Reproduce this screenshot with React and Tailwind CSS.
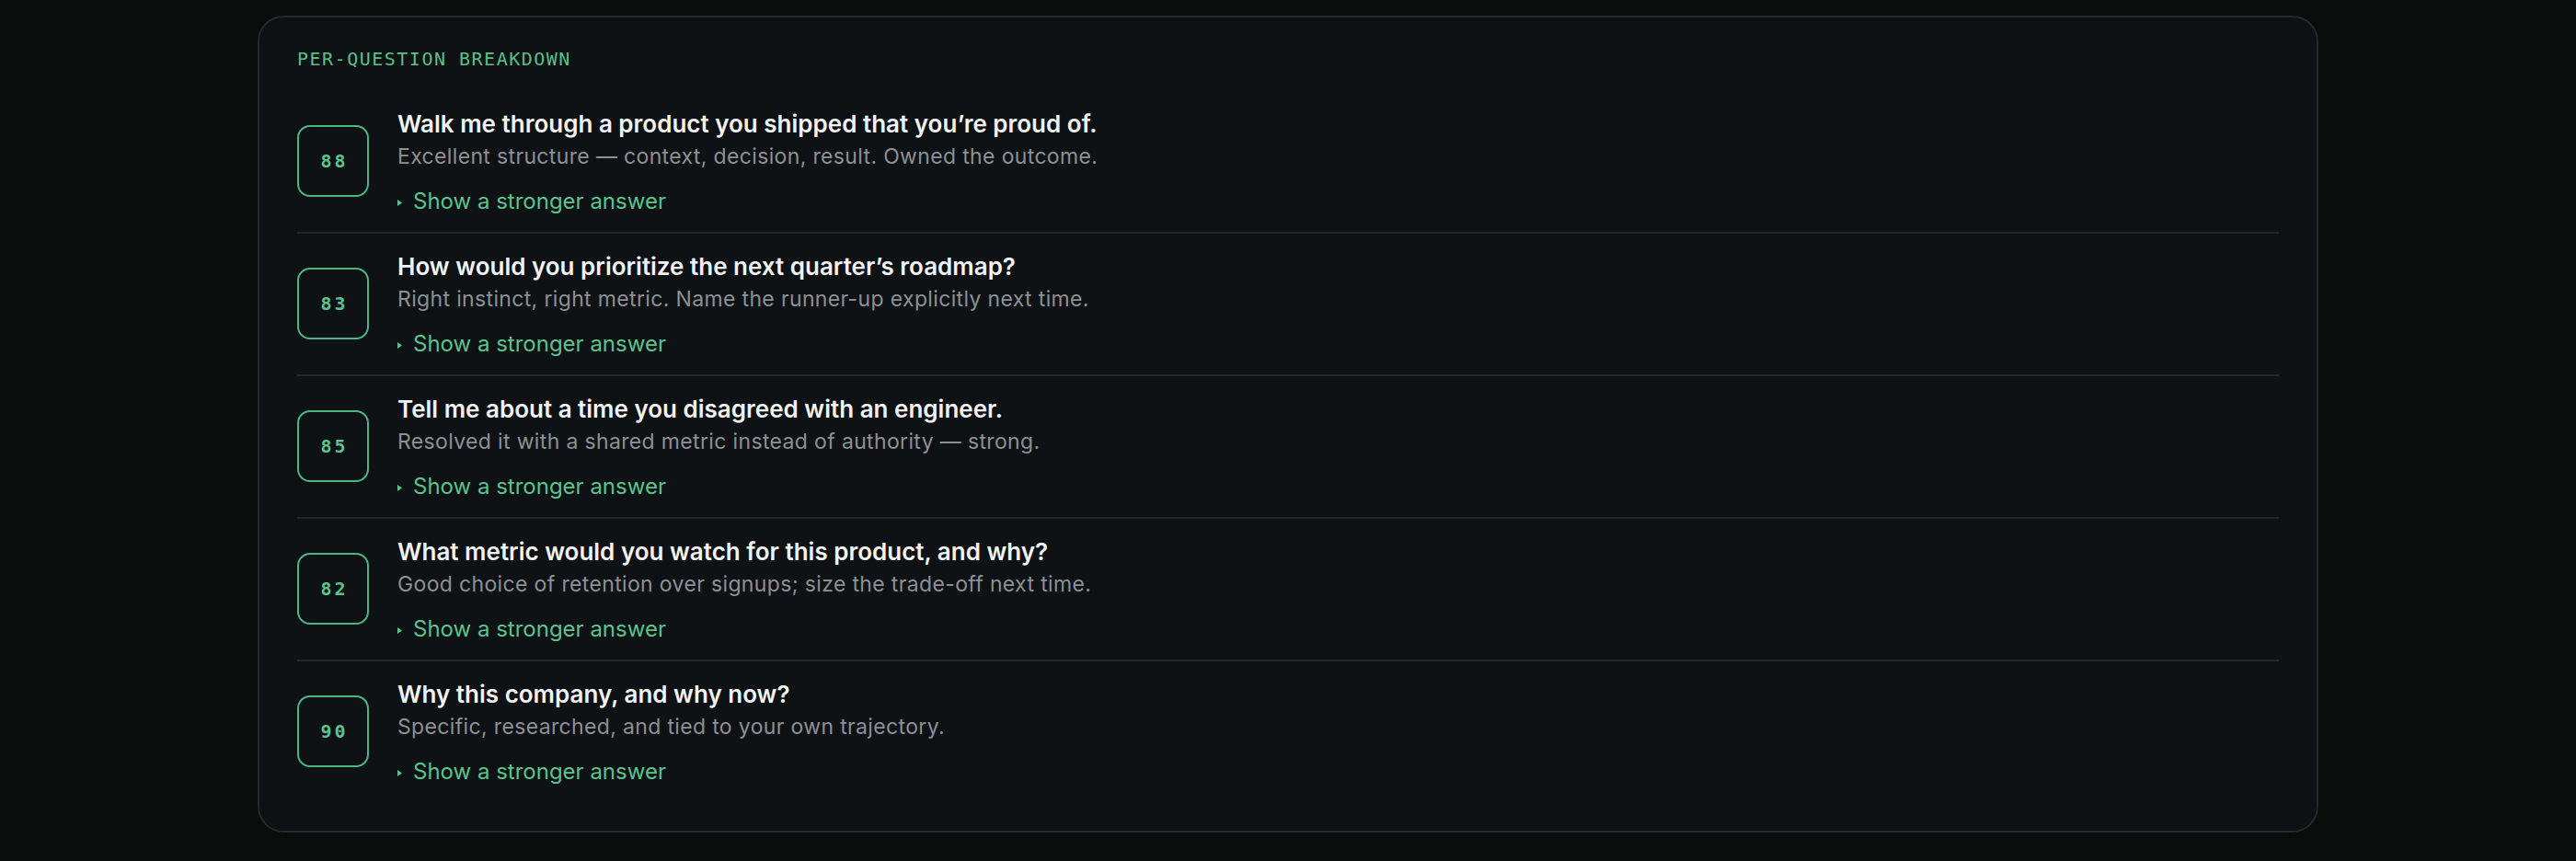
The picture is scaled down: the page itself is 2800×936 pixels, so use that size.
const questions = [
  {
    score: 88,
    title: "Walk me through a product you shipped that you’re proud of.",
    note: "Excellent structure — context, decision, result. Owned the outcome.",
  },
  {
    score: 83,
    title: "How would you prioritize the next quarter’s roadmap?",
    note: "Right instinct, right metric. Name the runner-up explicitly next time.",
  },
  {
    score: 85,
    title: "Tell me about a time you disagreed with an engineer.",
    note: "Resolved it with a shared metric instead of authority — strong.",
  },
  {
    score: 82,
    title: "What metric would you watch for this product, and why?",
    note: "Good choice of retention over signups; size the trade-off next time.",
  },
  {
    score: 90,
    title: "Why this company, and why now?",
    note: "Specific, researched, and tied to your own trajectory.",
  },
];

function QuestionRow({ q, last }) {
  return (
    <div
      className={`flex items-start gap-[31px] pt-[19px] pb-[17px] ${
        last ? "" : "border-b-2 border-[#23262a]"
      }`}
    >
      <div className="mt-[18px] flex h-[78px] w-[78px] shrink-0 items-center justify-center rounded-[14px] border-2 border-[#4cb582]">
        <span className="font-['DejaVu_Sans_Mono',monospace] text-[20px] font-bold tracking-[3px] text-[#5cc28d] pl-[3px]">
          {q.score}
        </span>
      </div>
      <div className="flex flex-col">
        <p className="text-[26px] leading-[34px] font-semibold text-[#f1f2f3]">
          {q.title}
        </p>
        <p className="mt-[3px] text-[23px] leading-[30px] tracking-[0.35px] text-[#8c9095]">
          {q.note}
        </p>
        <button className="mt-[18px] flex items-center gap-[12px] text-left text-[24px] leading-[32px] text-[#5cc28d]">
          <svg width="5" height="7" viewBox="0 0 5 7" className="mt-[2px]">
            <path d="M0 0 L5 3.5 L0 7 Z" fill="#5cc28d" />
          </svg>
          Show a stronger answer
        </button>
      </div>
    </div>
  );
}

export default function App() {
  return (
    <div className="min-h-screen bg-[#0b0c0c] px-[280px] pt-[17px] pb-[32px] font-['Inter','Noto_Sans',sans-serif]">
      <div className="rounded-[28px] border-2 border-[#25282c] bg-[#0f1215] px-[41px] pt-[31px] pb-[31px]">
        <h2 className="font-['DejaVu_Sans_Mono',monospace] text-[20px] leading-[28px] tracking-[1.5px] text-[#5bbf8a]">
          PER-QUESTION BREAKDOWN
        </h2>
        <div className="mt-[21px]">
          {questions.map((q, i) => (
            <QuestionRow key={q.score} q={q} last={i === questions.length - 1} />
          ))}
        </div>
      </div>
    </div>
  );
}
